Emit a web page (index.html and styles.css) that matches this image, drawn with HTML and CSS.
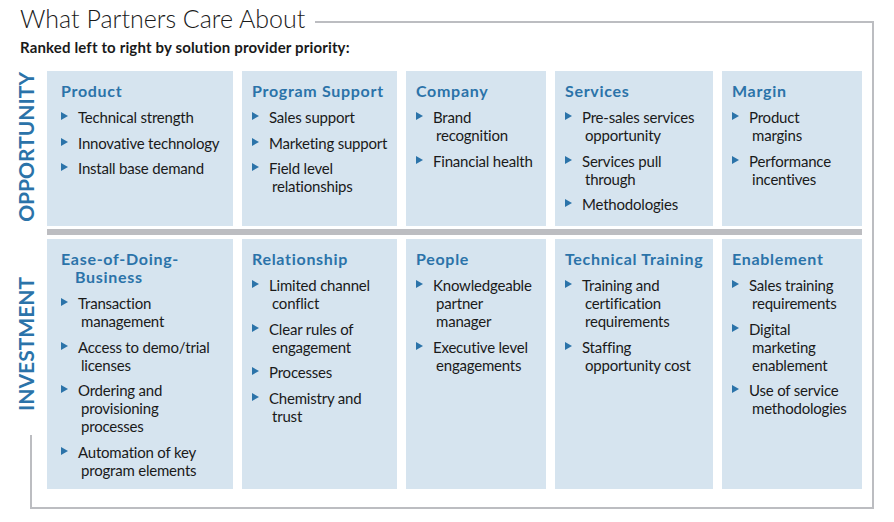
FILE: index.html
```html
<!DOCTYPE html>
<html lang="en">
<head>
<meta charset="utf-8">
<title>What Partners Care About</title>
<link rel="stylesheet" href="styles.css">
</head>
<body>
<section class="frame">
  <h1 class="title">What Partners Care About</h1>
  <p class="subtitle">Ranked left to right by solution provider priority:</p>
  <div class="board">
    <div class="label-cell opp"><span class="vlabel">OPPORTUNITY</span></div>

    <div class="card first">
      <h2>Product</h2>
      <ul>
        <li><span>Technical strength</span></li>
        <li><span>Innovative technology</span></li>
        <li><span>Install base demand</span></li>
      </ul>
    </div>
    <div class="card">
      <h2>Program Support</h2>
      <ul>
        <li><span>Sales support</span></li>
        <li><span>Marketing support</span></li>
        <li><span>Field level<br>relationships</span></li>
      </ul>
    </div>
    <div class="card">
      <h2>Company</h2>
      <ul>
        <li><span>Brand<br>recognition</span></li>
        <li><span>Financial health</span></li>
      </ul>
    </div>
    <div class="card">
      <h2>Services</h2>
      <ul>
        <li><span>Pre-sales services<br>opportunity</span></li>
        <li><span>Services pull<br>through</span></li>
        <li><span>Methodologies</span></li>
      </ul>
    </div>
    <div class="card">
      <h2>Margin</h2>
      <ul>
        <li><span>Product<br>margins</span></li>
        <li><span>Performance<br>incentives</span></li>
      </ul>
    </div>

    <div class="sep"></div>

    <div class="label-cell inv"><span class="vlabel">INVESTMENT</span><span class="leftline"></span></div>

    <div class="card first">
      <h2>Ease-of-Doing-<br>Business</h2>
      <ul>
        <li><span>Transaction<br>management</span></li>
        <li><span>Access to demo/trial<br>licenses</span></li>
        <li><span>Ordering and<br>provisioning<br>processes</span></li>
        <li><span>Automation of key<br>program elements</span></li>
      </ul>
    </div>
    <div class="card">
      <h2>Relationship</h2>
      <ul>
        <li><span>Limited channel<br>conflict</span></li>
        <li><span>Clear rules of<br>engagement</span></li>
        <li><span>Processes</span></li>
        <li><span>Chemistry and<br>trust</span></li>
      </ul>
    </div>
    <div class="card">
      <h2>People</h2>
      <ul>
        <li><span>Knowledgeable<br>partner<br>manager</span></li>
        <li><span>Executive level<br>engagements</span></li>
      </ul>
    </div>
    <div class="card">
      <h2>Technical Training</h2>
      <ul>
        <li><span>Training and<br>certification<br>requirements</span></li>
        <li><span>Staffing<br>opportunity cost</span></li>
      </ul>
    </div>
    <div class="card">
      <h2>Enablement</h2>
      <ul>
        <li><span>Sales training<br>requirements</span></li>
        <li><span>Digital<br>marketing<br>enablement</span></li>
        <li><span>Use of service<br>methodologies</span></li>
      </ul>
    </div>
  </div>
</section>
</body>
</html>
```

FILE: styles.css
```css
* {
  box-sizing: border-box;
  margin: 0;
  padding: 0;
}

body {
  margin: 0;
  background: #ffffff;
  font-family: Lato, "Liberation Sans", sans-serif;
  color: #1a1a1a;
}

.frame {
  margin: 21px 0 0 30px;
  width: 844px;
  border: 2px solid #bcbdc1;
  border-left: 0;
  padding-bottom: 18px;
}

.title {
  width: fit-content;
  margin: -20px 0 0 -10px;
  padding: 0 10px 0 0;
  background: #ffffff;
  font-size: 25px;
  font-weight: 300;
  line-height: 30px;
  color: #1a1a1a;
}

.subtitle {
  margin: 6px 0 0 -10px;
  font-size: 15px;
  font-weight: 700;
  line-height: 17px;
  letter-spacing: 0.15px;
  color: #1a1a1a;
}

.board {
  display: grid;
  margin: 15px 0 0 -12px;
  grid-template-columns: 20px 186px 155px 140px 158px 140px;
  grid-template-rows: 155px auto 250px;
  column-gap: 9px;
}

.label-cell {
  grid-column: 1;
}

.label-cell.opp {
  grid-row: 1;
  padding-top: 1px;
}

.label-cell.inv {
  grid-row: 3;
  display: flex;
  flex-direction: column;
  justify-content: space-between;
  align-items: flex-start;
  padding-top: 38px;
  margin-bottom: -20px;
}

.vlabel {
  display: block;
  margin-left: -2px;
  writing-mode: vertical-rl;
  transform: rotate(180deg);
  font-size: 21px;
  font-weight: 700;
  line-height: 20px;
  color: #2b73a9;
}

.leftline {
  display: block;
  width: 2px;
  height: 74px;
  margin-left: 12px;
  background: #bcbdc1;
}

.sep {
  grid-column: 2 / -1;
  height: 6px;
  margin: 3px 0 4px;
  background: #bcbdc1;
}

.card {
  background: #d6e4ef;
  padding: 11px 10px 0;
}

.card.first {
  padding-left: 14px;
}

.card h2 {
  font-size: 16px;
  font-weight: 700;
  line-height: 18px;
  letter-spacing: 0.7px;
  white-space: nowrap;
  color: #2b73a9;
  padding-left: 14px;
  text-indent: -14px;
}

.card ul {
  list-style: none;
  margin-top: 8px;
}

.card li {
  display: flex;
  font-size: 15px;
  line-height: 18px;
  letter-spacing: -0.2px;
  white-space: nowrap;
}

.card li + li {
  margin-top: 7.5px;
}

.card li::before {
  content: "";
  flex: none;
  width: 0;
  height: 0;
  border-left: 7px solid #2b73a9;
  border-top: 4.5px solid transparent;
  border-bottom: 4.5px solid transparent;
  margin: 4px 13px 0 0;
}

.card li span {
  text-indent: -3px;
}
```
